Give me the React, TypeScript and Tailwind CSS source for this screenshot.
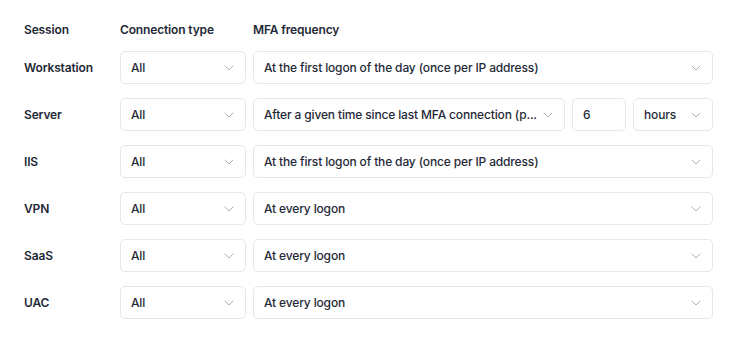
import React from "react";
import { ChevronDown } from "lucide-react";

const font = { fontFamily: "Inter, 'Noto Sans', sans-serif" };

function Select({ value, className = "" }: { value: string; className?: string }) {
  return (
    <div
      className={`flex h-[33px] min-w-0 items-center justify-between gap-[2px] rounded-[5px] border border-[#e5e7eb] bg-white pl-[10px] pr-[8px] ${className}`}
    >
      <span className="min-w-0 whitespace-nowrap text-[12px] font-medium tracking-[-0.15px] text-[#1f2937]">{value}</span>
      <ChevronDown size={16} strokeWidth={1.3} className="shrink-0 text-[#9ca3af]" />
    </div>
  );
}

const rows = [
  { label: "Workstation", mfa: "At the first logon of the day (once per IP address)" },
  { label: "Server", mfa: "After a given time since last MFA connection (p...", extra: true },
  { label: "IIS", mfa: "At the first logon of the day (once per IP address)" },
  { label: "VPN", mfa: "At every logon" },
  { label: "SaaS", mfa: "At every logon" },
  { label: "UAC", mfa: "At every logon" },
];

const head = "flex h-[17px] items-center text-[12px] font-semibold tracking-[-0.15px] text-[#1f2937]";

export default function App() {
  return (
    <div className="min-h-[344px] w-[738px] bg-white pl-[24px] pr-[25px] pt-[21px]" style={font}>
      <div className="grid grid-cols-[89px_126px_minmax(0,1fr)] gap-x-[7px]">
        <div className={head}>Session</div>
        <div className={head}>Connection type</div>
        <div className={head}>MFA frequency</div>
      </div>
      <div className="mt-[13px] flex flex-col gap-[14px]">
        {rows.map((r) => (
          <div key={r.label} className="grid grid-cols-[89px_126px_minmax(0,1fr)] items-center gap-x-[7px]">
            <div className="text-[12px] font-semibold tracking-[-0.15px] text-[#1f2937]">{r.label}</div>
            <Select value="All" />
            {r.extra ? (
              <div className="flex min-w-0 gap-[7px]">
                <Select value={r.mfa} className="flex-1" />
                <div className="flex h-[33px] w-[54px] shrink-0 items-center rounded-[5px] border border-[#e5e7eb] bg-white pl-[10px] text-[12px] font-medium text-[#1f2937]">
                  6
                </div>
                <Select value="hours" className="w-[80px] shrink-0" />
              </div>
            ) : (
              <Select value={r.mfa} />
            )}
          </div>
        ))}
      </div>
    </div>
  );
}
